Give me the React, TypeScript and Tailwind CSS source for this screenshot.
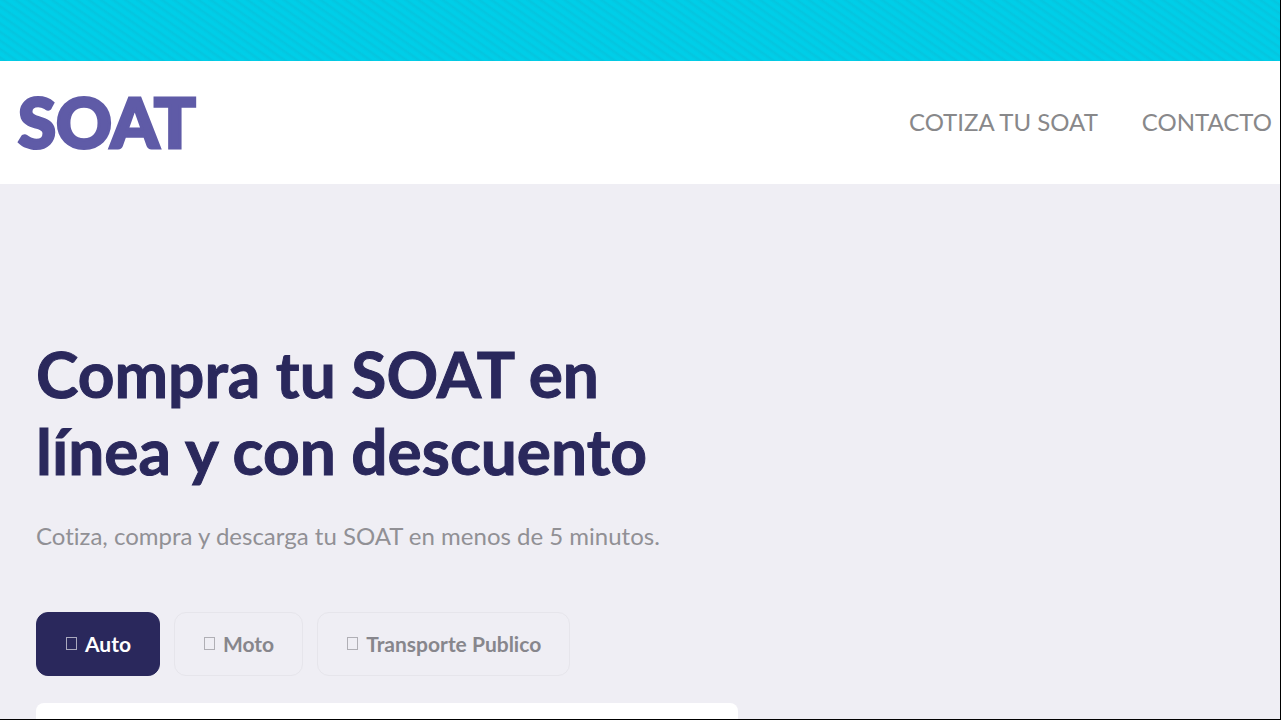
const vehicles = ["Auto", "Moto", "Transporte Publico"];

const tabBase =
  "flex h-16 items-center gap-2 rounded-xl border px-7 text-[21px] leading-6 font-bold";

function TabIcon() {
  return (
    <svg width="12" height="14" viewBox="0 0 12 14" fill="none" aria-hidden="true" className="shrink-0 opacity-60">
      <rect x="1.5" y="0.5" width="10" height="12" stroke="currentColor" />
    </svg>
  );
}

export default function App() {
  return (
    <div className="flex min-h-screen flex-col border-r border-b border-black bg-[#efeef4] font-['Lato',sans-serif] [font-variant-ligatures:none]">
      <div className="h-[61px] bg-[#00cbe6] bg-[repeating-linear-gradient(215deg,#00cee8_0px,#00cee8_2px,#05c5df_4px,#00cee8_7px)]" />
      <header className="flex h-[123px] items-center justify-between bg-white pr-2 pb-[2px] pl-[18px]">
        <a
          href="#"
          className="text-[69px] leading-[80px] font-black text-[#5f5ba7] [-webkit-text-stroke:3px_#5f5ba7]"
        >
          SOAT
        </a>
        <nav className="flex gap-11 text-[24px] leading-8 text-[#88888a]">
          <a href="#cotiza">COTIZA TU SOAT</a>
          <a href="#contacto">CONTACTO</a>
        </nav>
      </header>
      <main className="flex flex-1 flex-col px-9 pt-[151px]">
        <h1 className="max-w-[680px] text-[64px] leading-[77px] font-bold text-[#2a285c] [-webkit-text-stroke:1px_#2a285c]">
          Compra tu SOAT en
          <br />
          línea y con descuento
        </h1>
        <p className="mt-[31px] text-[24px] leading-8 text-[#919095]">
          Cotiza, compra y descarga tu SOAT en menos de 5 minutos.
        </p>
        <div className="mt-[60px] flex gap-[14px]">
          {vehicles.map((name, i) => (
            <button
              key={name}
              type="button"
              className={
                i === 0
                  ? `${tabBase} border-[#2a285c] bg-[#2a285c] text-white`
                  : `${tabBase} border-[#e6e5eb] text-[#87868c]`
              }
            >
              <TabIcon />
              {name}
            </button>
          ))}
        </div>
        <section className="mt-[27px] min-h-4 w-full max-w-[702px] flex-1 rounded-t-lg bg-white" />
      </main>
    </div>
  );
}
